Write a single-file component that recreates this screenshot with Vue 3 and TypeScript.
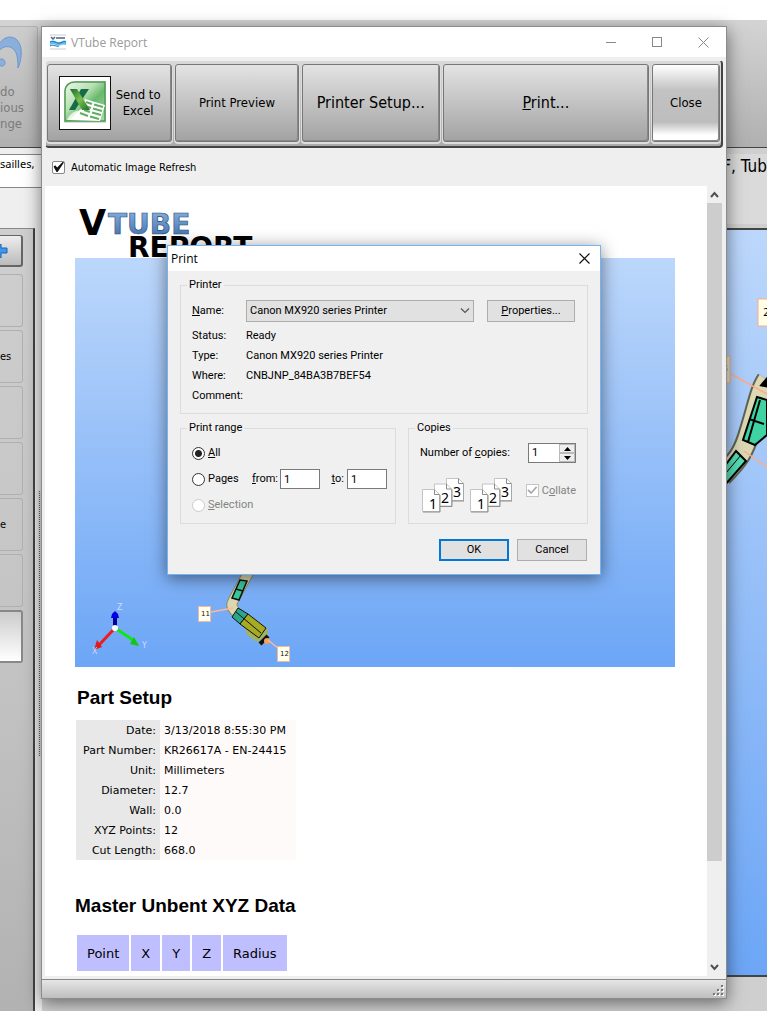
<script setup lang="ts">
import { ref } from 'vue'

interface Field {
  label: string
  value: string
}

const refresh = ref(true)
const collate = ref(true)
const range = ref('all')
const fromPage = ref('1')
const toPage = ref('1')
const copies = ref(1)
const printer = ref('Canon MX920 series Printer')

const sideButtons: string[] = ['', 'es', '', '', 'e', '']

const printerInfo: Field[] = [
  { label: 'Status:', value: 'Ready' },
  { label: 'Type:', value: 'Canon MX920 series Printer' },
  { label: 'Where:', value: 'CNBJNP_84BA3B7BEF54' },
  { label: 'Comment:', value: '' },
]

const partSetup: Field[] = [
  { label: 'Date:', value: '3/13/2018 8:55:30 PM' },
  { label: 'Part Number:', value: 'KR26617A - EN-24415' },
  { label: 'Unit:', value: 'Millimeters' },
  { label: 'Diameter:', value: '12.7' },
  { label: 'Wall:', value: '0.0' },
  { label: 'XYZ Points:', value: '12' },
  { label: 'Cut Length:', value: '668.0' },
]

const columns: string[] = ['Point', 'X', 'Y', 'Z', 'Radius']

function step(delta: number): void {
  copies.value = Math.max(1, copies.value + delta)
}
</script>

<template>
  <div class="desktop">
    <div class="app">
      <header class="ribbon">
        <button class="undo" type="button">
          <svg width="24" height="34" viewBox="0 0 24 34" aria-hidden="true">
            <path d="M-2 10C3 0 12 -1 17 4C22 9 23 20 18 32C18 22 17 15 12 12C7 9 2 11 -2 16Z" fill="#8aafdc" stroke="#6f97cc" />
            <path d="M-2 24C2 22 5 23 5 27C5 30 2 31 -2 29Z" fill="#8aafdc" stroke="#6f97cc" />
          </svg>
          <span>do</span><span>ious</span><span>nge</span>
        </button>
      </header>
      <div class="workspace">
        <aside class="side">
          <div class="address">sailles,</div>
          <div class="side-body">
            <div class="panel">
              <button class="add" type="button" aria-label="Add">
                <svg width="8" height="14" viewBox="0 0 8 14"><path d="M-6 4H-3V0H1V4H7V9H1V14H-3V9H-6Z" fill="#3d97ee" stroke="#1c63b5" /></svg>
              </button>
              <button v-for="(text, i) in sideButtons" :key="i" class="side-btn" type="button">{{ text }}</button>
              <button class="side-btn active" type="button" aria-label="Selected"></button>
            </div>
            <div class="splitter"></div>
          </div>
        </aside>
        <section class="viewer">
          <div class="viewer-title">F, Tub</div>
          <div class="viewer-scene">
            <svg width="41" height="270" viewBox="0 0 41 270" aria-hidden="true">
              <path d="M41 150C34 160 31 178 24 200C18 222 12 230 -4 246" fill="none" stroke="#5f6350" stroke-width="22" />
              <path d="M41 150C34 160 31 178 24 200C18 222 12 230 -4 246" fill="none" stroke="#dcd8b4" stroke-width="18" />
              <path d="M31 167L41 170V205L29 215L17 210Z" fill="#3fd3a3" stroke="#000" stroke-width="2" />
              <path d="M23 189L38 194M34 170L22 212" fill="none" stroke="#000" stroke-width="2" />
              <path d="M10 221L20 231L-2 256V237Z" fill="#55deb4" stroke="#000" stroke-width="2" />
              <path d="M15 225L0 243" stroke="#000" />
              <path d="M36 155L41 149V156Z" stroke="#000" stroke-width="3" />
              <path d="M5 144L41 164M18 221L41 237" stroke="#ffac86" stroke-width="1.5" />
              <rect x="-8" y="126" width="12" height="27" fill="#e6e4c6" stroke="#f4ad8a" />
              <rect x="32" y="69" width="14" height="27" fill="#fffee6" stroke="#ffac86" />
              <text x="37" y="86" font-family="DejaVu Sans" font-size="11">2</text>
              <text x="-5" y="142" font-family="DejaVu Sans" font-size="11">3</text>
            </svg>
          </div>
        </section>
      </div>
    </div>

    <main class="window">
      <header class="titlebar">
        <svg width="16" height="16" viewBox="0 0 16 16" aria-hidden="true">
          <path d="M0 1H16M0 15H16" stroke="#ccc" />
          <path d="M1 3L3 5L5 3M6 4H15" stroke="#4e6485" stroke-width="1.5" fill="none" />
          <path d="M0 7C4 5 7 9 10 8C13 7 14 6 16 7V11C12 9 10 13 6 11C4 10 2 10 0 11Z" fill="#5dc0f2" />
          <path d="M0 8C4 6 7 10 10 9C13 8 14 7 16 8M0 12C4 10 6 13 9 12" stroke="#1c6fb8" fill="none" />
        </svg>
        <h1>VTube Report</h1>
        <div class="caption">
          <button type="button" aria-label="Minimize"><svg width="11" height="11"><path d="M0 5.5H10" stroke="#888" /></svg></button>
          <button type="button" aria-label="Maximize"><svg width="11" height="11"><rect x=".5" y=".5" width="9" height="9" fill="none" stroke="#888" /></svg></button>
          <button type="button" aria-label="Close window"><svg width="11" height="11"><path d="M.5 .5L10.5 10.5M10.5 .5L.5 10.5" stroke="#888" /></svg></button>
        </div>
      </header>

      <nav class="toolbar">
        <button class="tool excel" type="button">
          <svg width="52" height="54" viewBox="0 0 52 54" aria-hidden="true">
            <defs>
              <linearGradient id="xl" x1="0" y1="0" x2="1" y2="1">
                <stop offset="0" stop-color="#eef8ea" /><stop offset=".4" stop-color="#b5dfb0" /><stop offset=".6" stop-color="#67b96c" /><stop offset="1" stop-color="#aadba4" />
              </linearGradient>
              <linearGradient id="xg" x1="0" y1="0" x2="1" y2="1">
                <stop offset="0" stop-color="#126c36" /><stop offset=".5" stop-color="#7cc04b" /><stop offset="1" stop-color="#176e30" />
              </linearGradient>
            </defs>
            <rect x=".5" y=".5" width="51" height="53" fill="#fff" stroke="#111" />
            <path d="M16 5H47V47H5V16C5 10 9 5 16 5Z" fill="#999" opacity=".35" />
            <path d="M16 6H46V45H6V15C6 10 10 6 16 6Z" fill="url(#xl)" stroke="#4c9a54" stroke-width="1.5" />
            <path d="M8 44C10 38 16 34 24 34L30 44Z" fill="#e4f4df" />
            <path d="M26 23L46 29L41 45L10 44L22 33Z" fill="#fff" />
            <path d="M27 26L33 28M35 28.5L44 31M26 30L32 32M34 32.5L43 35M25 34L31 36M33 36.5L42 39M21 37L29 40M31 40.5L40 43" stroke="#61ad61" stroke-width="2" />
            <path d="M22 13H30L16 34H10Z" fill="#176b48" />
            <path d="M11 13H18L31 34H23Z" fill="url(#xg)" />
          </svg>
          <span>Send to<br>Excel</span>
        </button>
        <button class="tool preview" type="button">Print Preview</button>
        <button class="tool setup large" type="button">Printer Setup...</button>
        <button class="tool print large" type="button"><span><u>P</u>rint...</span></button>
        <button class="tool close" type="button">Close</button>
      </nav>

      <label class="refresh"><input v-model="refresh" class="check dark" type="checkbox">Automatic Image Refresh</label>

      <div class="body">
        <article class="report">
          <svg class="logo" width="240" height="52" viewBox="0 0 240 52" role="img" aria-label="VTube Report">
            <defs>
              <linearGradient id="tube" x1="0" y1="0" x2="0" y2="1">
                <stop offset="0" stop-color="#8bb4e2" /><stop offset="1" stop-color="#3a6ba8" />
              </linearGradient>
            </defs>
            <g font-family="DejaVu Sans" font-weight="bold">
              <text x="4" y="29" font-size="35">V</text>
              <text x="33" y="28" font-size="28" fill="url(#tube)" stroke="#27466f" stroke-width=".6">TUBE</text>
              <text x="53" y="51" font-size="28">REPORT</text>
            </g>
          </svg>
          <svg class="scene" viewBox="0 0 600 409" role="img" aria-label="Tube model">
            <defs>
              <linearGradient id="sky" x1="0" y1="0" x2="0" y2="1">
                <stop offset="0" stop-color="#bcd7fb" /><stop offset=".5" stop-color="#94bef8" /><stop offset="1" stop-color="#6ca6f6" />
              </linearGradient>
            </defs>
            <rect width="600" height="409" fill="url(#sky)" />
            <path d="M40 370V358" stroke="#00009c" stroke-width="4" />
            <path d="M36 360L37 356L40 353L43 356L44 360Z" fill="#0000e8" />
            <path d="M40 370L24 387" stroke="#f01c1c" stroke-width="3" />
            <path d="M22 382L27 389L19 392Z" fill="#e01a1a" />
            <path d="M40 370L58 382" stroke="#10e610" stroke-width="3" />
            <path d="M59 379L64 388L55 386Z" fill="#10c810" />
            <circle cx="40" cy="370" r="3" fill="#fff" />
            <g font-family="DejaVu Sans" font-size="8" fill="#c9dcff">
              <text x="42" y="352">Z</text><text x="17" y="396">X</text><text x="67" y="390">Y</text>
            </g>
            <path d="M176 310L158 343Q155 348 160 353L186 377" fill="none" stroke="#8f8d6c" stroke-width="11" />
            <path d="M176 310L158 343Q155 348 160 353L186 377" fill="none" stroke="#dcd7ae" stroke-width="9" />
            <path d="M165 322L172 323L164 342L157 340Z" fill="#36c99b" stroke="#111" stroke-width="1.5" />
            <path d="M161 331L168 333" stroke="#111" stroke-width="1.5" />
            <path d="M170 363L180 361L193 371V385L180 383L171 376Z" fill="#b5b524" opacity=".65" />
            <path d="M163 350L173 356L165 366L157 359Z" fill="#2ca58d" stroke="#111" />
            <path d="M173 356L191 370L184 380L165 366Z" fill="#a5ac22" stroke="#111" />
            <path d="M161 354L186 375" stroke="#111" />
            <path d="M193 378L185 386" stroke="#111" stroke-width="4" />
            <circle cx="192" cy="383" r="3" fill="#f0a15a" />
            <path d="M136 354L158 350M193 382L204 391" stroke="#ffb795" stroke-width="1.5" />
            <g fill="#fffff0" stroke="#efb99e">
              <rect x="123.500" y="348.500" width="12" height="15" /><rect x="202.500" y="388.500" width="12" height="15" />
            </g>
            <g font-family="DejaVu Sans" font-size="7" fill="#111">
              <text x="126" y="358">11</text><text x="205" y="398">12</text>
            </g>
          </svg>
          <h2>Part Setup</h2>
          <table class="facts">
            <tbody>
              <tr v-for="f in partSetup" :key="f.label"><th scope="row">{{ f.label }}</th><td>{{ f.value }}</td></tr>
            </tbody>
          </table>
          <h2 class="second">Master Unbent XYZ Data</h2>
          <table class="xyz">
            <thead><tr><th v-for="c in columns" :key="c" scope="col">{{ c }}</th></tr></thead>
          </table>
        </article>
        <div class="scrollbar">
          <button type="button" aria-label="Scroll up"><svg width="9" height="7"><path d="M1 6L4.500 2L8 6" fill="none" stroke="#505050" stroke-width="2" /></svg></button>
          <div class="track"><div class="thumb"></div></div>
          <button type="button" aria-label="Scroll down"><svg width="9" height="7"><path d="M1 1L4.500 5L8 1" fill="none" stroke="#505050" stroke-width="2" /></svg></button>
        </div>
      </div>

      <footer class="status">
        <svg width="12" height="12" viewBox="0 0 12 12" aria-hidden="true">
          <path d="M9 1h2v2h-2zM5 5h2v2h-2zM9 5h2v2h-2zM1 9h2v2h-2zM5 9h2v2h-2zM9 9h2v2h-2z" fill="#fff" />
          <path d="M8 0h2v2h-2zM4 4h2v2h-2zM8 4h2v2h-2zM0 8h2v2h-2zM4 8h2v2h-2zM8 8h2v2h-2z" fill="#777" />
        </svg>
      </footer>

      <section class="dialog" role="dialog" aria-labelledby="dlg-title">
        <header class="dialog-title">
          <h2 id="dlg-title">Print</h2>
          <button type="button" aria-label="Close dialog"><svg width="11" height="11"><path d="M.5 .5L10.5 10.5M10.5 .5L.5 10.5" stroke="#111" stroke-width="1.2" /></svg></button>
        </header>
        <form class="dialog-body" @submit.prevent>
          <fieldset class="printer">
            <legend>Printer</legend>
            <div class="name-row">
              <label for="printer"><u>N</u>ame:</label>
              <div class="select">
                <select id="printer" v-model="printer"><option>Canon MX920 series Printer</option></select>
                <svg width="10" height="6" viewBox="0 0 10 6" aria-hidden="true"><path d="M1 .5L5 4.500L9 .5" fill="none" stroke="#555" stroke-width="1.2" /></svg>
              </div>
              <button class="btn props" type="button"><span><u>P</u>roperties...</span></button>
            </div>
            <dl>
              <template v-for="f in printerInfo" :key="f.label"><dt>{{ f.label }}</dt><dd>{{ f.value }}</dd></template>
            </dl>
          </fieldset>
          <div class="columns">
            <fieldset class="range">
              <legend>Print range</legend>
              <div class="line"><label><input v-model="range" class="radio" type="radio" value="all"><span><u>A</u>ll</span></label></div>
              <div class="line">
                <label class="pages"><input v-model="range" class="radio" type="radio" value="pages"><span>Pa<u>g</u>es</span></label>
                <label for="from"><u>f</u>rom:</label><input id="from" v-model="fromPage" class="num" type="text">
                <label for="to" class="to"><u>t</u>o:</label><input id="to" v-model="toPage" class="num" type="text">
              </div>
              <div class="line"><label class="off"><input v-model="range" class="radio" type="radio" value="selection" disabled><span><u>S</u>election</span></label></div>
            </fieldset>
            <fieldset class="copies">
              <legend>Copies</legend>
              <div class="line spread">
                <label for="copies"><span>Number of <u>c</u>opies:</span></label>
                <div class="spinner">
                  <input id="copies" v-model="copies" type="text">
                  <div>
                    <button type="button" aria-label="More copies" @click="step(1)"><svg width="7" height="4"><path d="M0 4L3.500 0L7 4Z" /></svg></button>
                    <button type="button" aria-label="Fewer copies" @click="step(-1)"><svg width="7" height="4"><path d="M0 0L3.500 4L7 0Z" /></svg></button>
                  </div>
                </div>
              </div>
              <div class="spread">
                <div class="stacks">
                  <svg v-for="n in 2" :key="n" width="42" height="36" viewBox="0 0 42 36" aria-hidden="true">
                    <g v-for="p in [3, 2, 1]" :key="p">
                      <path :d="`M${p * 12 - 11.5} ${17.5 - p * 5.5 + 0.5}h12l5 5v17h-17z`" fill="#fff" stroke="#c4c4c4" />
                      <path :d="`M${p * 12 + 0.5} ${18 - p * 5.5}v5h5M${p * 12 - 11} ${40.5 - p * 5.5}h17v-17`" fill="none" stroke="#8c8c8c" />
                      <text :x="p * 12 - 5" :y="38 - p * 6" font-family="Noto Sans" font-size="14">{{ p }}</text>
                    </g>
                  </svg>
                </div>
                <label class="off"><input v-model="collate" class="check" type="checkbox" disabled><span>C<u>o</u>llate</span></label>
              </div>
            </fieldset>
          </div>
          <div class="actions">
            <button class="btn ok" type="submit">OK</button>
            <button class="btn" type="button">Cancel</button>
          </div>
        </form>
      </section>
    </main>
  </div>
</template>

<style>
html,
body {
  margin: 0;
  background: #fff;
}
</style>

<style scoped>
* {
  box-sizing: border-box;
}
button,
input,
select {
  margin: 0;
  padding: 0;
  font: inherit;
  color: inherit;
}
button {
  border: 0;
  background: none;
}
svg {
  display: block;
  flex: none;
}
.desktop {
  position: relative;
  min-height: 100vh;
  overflow: hidden;
  font-family: "DejaVu Sans Condensed", "Noto Sans", sans-serif;
  font-size: 11px;
  color: #000;
}
.app {
  display: flex;
  flex-direction: column;
  min-height: 100vh;
  padding-top: 20px;
}
.ribbon {
  height: 128px;
  padding: 6px 0 10px;
  background: linear-gradient(#d4d4d4, #b0b0b0);
  border-bottom: 1px solid #444;
}
.undo {
  display: flex;
  flex-direction: column;
  align-items: flex-start;
  width: 38px;
  height: 112px;
  padding-top: 9px;
  border: 1px solid #b4b4b4;
  border-left: 0;
  border-radius: 0 3px 3px 0;
  background: linear-gradient(#cdcdcd, #b4b4b4);
  font-size: 13px;
  line-height: 16px;
  color: #7b7b7b;
}
.undo svg {
  margin-bottom: 14px;
}
.workspace {
  display: flex;
  flex: 1;
  background: #efefef;
}
.side {
  display: flex;
  flex-direction: column;
  width: 42px;
  padding-top: 6px;
}
.address {
  height: 34px;
  padding-top: 2px;
  border: 1px solid #888;
  border-width: 1px 0;
  background: #fff;
  font-family: "Noto Sans", sans-serif;
  line-height: 14px;
}
.side-body {
  display: flex;
  flex: 1;
  margin-top: 40px;
}
.panel {
  display: flex;
  flex-direction: column;
  gap: 3px;
  width: 35px;
  padding-top: 6px;
  border-top: 1px solid #888;
  border-right: 2px solid #444;
  background: linear-gradient(#cfcfcf, #c2c2c2 60%, #b2b2b2);
}
.add,
.side-btn {
  width: 23px;
  border: 1px solid #b0b0b0;
  border-left: 0;
  border-radius: 0 3px 3px 0;
  text-align: left;
}
.add {
  height: 32px;
  margin-bottom: 4px;
  border-color: #666;
  border-width: 1px 2px 2px 0;
  background: linear-gradient(#eee, #bbb);
}
.side-btn {
  height: 53px;
  font-size: 11px;
}
.side-btn.active {
  border: 2px solid #888;
  border-left: 0;
  background: linear-gradient(#ccc, #fff);
}
.splitter {
  width: 4px;
  height: 265px;
  margin: 263px 0 0 3px;
  background: conic-gradient(#666 25%, #e4e4e4 0) 0 0 / 2px 2px;
}
.viewer {
  display: flex;
  flex-direction: column;
  flex: 1;
  padding-top: 6px;
  background: #cfcfcf;
}
.viewer-title {
  display: flex;
  justify-content: flex-end;
  height: 70px;
  padding-top: 2px;
  background: #dadada;
  font-size: 17px;
  line-height: 20px;
}
.viewer-scene {
  display: flex;
  justify-content: flex-end;
  flex: 1;
  margin-top: 4px;
  margin-bottom: 34px;
  border: 1px solid #444;
  border-width: 2px 0;
  background: linear-gradient(#bcd7fb, #94bef8 50%, #6ca6f6);
}
.window {
  position: absolute;
  inset: 26px 40px 12px 41px;
  display: flex;
  flex-direction: column;
  border: 1px solid #8c8c8c;
  background: #efefef;
  box-shadow: 0 4px 16px rgba(0, 0, 0, 0.5);
}
.titlebar {
  display: flex;
  align-items: center;
  height: 30px;
  padding-left: 8px;
  background: #fff;
}
h1 {
  flex: 1;
  margin: 0 0 0 5px;
  font: 12px "Open Sans", sans-serif;
  color: #999;
}
.caption {
  display: flex;
}
.caption button {
  display: flex;
  justify-content: center;
  width: 46px;
}
.toolbar {
  display: flex;
  gap: 3px;
  height: 88px;
  margin: 3px 3px 0;
  padding: 3px 1px 4px;
  border: 1px solid #444;
  border-color: #eee #444 #444 #eee;
  border-width: 1px 2px 2px 1px;
  border-radius: 4px;
  background: linear-gradient(#d9d9d9, #aaa);
}
.tool {
  display: flex;
  align-items: center;
  justify-content: center;
  border: 1px solid #777;
  border-radius: 3px;
  background: linear-gradient(#e3e3e3, #a2a2a2);
  box-shadow: 0 1px 0 1px #ddd, inset -1px -1px 0 #888;
  font-size: 13px;
  line-height: 16px;
}
.excel {
  flex: 125 1 0;
  gap: 5px;
}
.preview {
  flex: 123 1 0;
}
.setup {
  flex: 138 1 0;
}
.print {
  flex: 207 1 0;
}
.close {
  flex: 67 1 0;
  background: linear-gradient(#fff, #c2c2c2 33%, #bdbdbd 75%, #fff 92%);
}
.large {
  font-size: 16px;
}
.refresh {
  display: flex;
  align-items: center;
  gap: 6px;
  height: 38px;
  padding-left: 10px;
}
.body {
  display: flex;
  flex: 1;
  min-height: 0;
  margin: 0 4px 3px 3px;
}
.report {
  flex: 1;
  padding: 20px 32px 0 30px;
  overflow: hidden;
  background: #fff;
}
.scene {
  width: 100%;
  max-width: 600px;
}
h2 {
  margin: 19px 0 11px 2px;
  font: bold 19px/23px "Liberation Sans", Arial, sans-serif;
}
.second {
  margin: 34px 0 18px;
}
table {
  border-collapse: collapse;
  font-family: "DejaVu Sans", Verdana, sans-serif;
}
th {
  font-weight: normal;
}
.facts {
  width: 220px;
  margin-left: 1px;
}
.facts th,
.facts td {
  height: 20px;
  padding: 1px 4px 0;
  background: #fffafa;
}
.facts th {
  width: 84px;
  background: #e8e8e8;
  text-align: right;
}
.xyz {
  border-collapse: separate;
  border-spacing: 2px 0;
  font-size: 13px;
}
.xyz th {
  height: 36px;
  padding: 0 10px;
  background: #bfbfff;
}
.scrollbar {
  display: flex;
  flex-direction: column;
  width: 15px;
}
.scrollbar button {
  display: flex;
  align-items: center;
  justify-content: center;
  height: 17px;
}
.track {
  flex: 1;
}
.thumb {
  height: 87%;
  background: #cdcdcd;
}
.status {
  display: flex;
  align-items: flex-end;
  justify-content: flex-end;
  height: 19px;
  padding: 0 1px 1px;
  border-top: 1px solid #888;
  background: linear-gradient(#e6e6e6, #bebebe);
}
.dialog {
  position: absolute;
  top: 218px;
  left: 125px;
  width: 434px;
  border: 1px solid #75b4f3;
  background: #f0f0f0;
  box-shadow: 0 3px 16px rgba(0, 0, 0, 0.5);
  font-family: Roboto, "Liberation Sans", sans-serif;
  line-height: 14px;
}
.dialog-title {
  display: flex;
  align-items: center;
  justify-content: space-between;
  height: 25px;
  padding: 0 10px 0 3px;
  background: #fff;
}
.dialog-title h2 {
  margin: 0;
  font: 12px "Open Sans", sans-serif;
}
.dialog-body {
  padding: 7px 12px 13px;
}
fieldset {
  min-width: 0;
  margin: 0;
  padding: 0 11px;
  border: 1px solid #dcdcdc;
}
legend {
  margin-left: -5px;
  padding: 0 2px;
}
.printer {
  padding: 8px 12px 7px 11px;
}
.name-row {
  display: flex;
  align-items: center;
}
.name-row label {
  width: 54px;
}
.select {
  position: relative;
  flex: 1;
}
.select svg {
  position: absolute;
  top: 8px;
  right: 4px;
  pointer-events: none;
}
select {
  display: block;
  width: 100%;
  height: 22px;
  padding: 0 3px;
  border: 1px solid #adadad;
  border-radius: 0;
  background: #e1e1e1;
  appearance: none;
}
.btn {
  height: 22px;
  width: 70px;
  border: 1px solid #adadad;
  background: #e1e1e1;
}
.btn.props {
  width: 88px;
  margin-left: 13px;
}
.btn.ok {
  border: 2px solid #0078d7;
}
dl {
  display: grid;
  grid-template-columns: 54px 1fr;
  margin: 4px 0 0;
}
dt,
dd {
  height: 20px;
  margin: 0;
  line-height: 20px;
}
.columns {
  display: grid;
  grid-template-columns: 216px 180px;
  justify-content: space-between;
  margin-top: 7px;
}
.range,
.copies {
  padding: 5px 11px;
}
.range {
  padding-right: 8px;
}
.line,
.line label,
.off {
  display: flex;
  align-items: center;
}
.line {
  height: 26px;
}
.pages {
  width: 60px;
}
.line .to {
  margin-left: auto;
  padding-right: 3px;
}
.num {
  width: 40px;
  height: 20px;
  margin-left: 2px;
  padding: 0 3px;
  border: 1px solid #7a7a7a;
  background: #fff;
}
.line .to + .num {
  margin-left: 0;
}
.off {
  color: #838383;
}
.radio {
  width: 13px;
  height: 13px;
  margin-right: 3px;
  border: 1px solid #333;
  border-radius: 50%;
  background: #fff;
  appearance: none;
}
.radio:checked {
  background: radial-gradient(#222 3px, #fff 4px);
}
.radio:disabled {
  border-color: #ccc;
}
.check {
  display: grid;
  place-items: center;
  width: 13px;
  height: 13px;
  margin-right: 3px;
  border: 1px solid #c4c4c4;
  background: #fff;
  color: #aaa;
  appearance: none;
}
.check:checked::before {
  content: "";
  width: 11px;
  height: 11px;
  background: currentColor;
  clip-path: polygon(5% 50%, 18% 38%, 40% 62%, 84% 12%, 95% 22%, 40% 84%);
}
.check.dark {
  margin: 0;
  border-color: #888;
  border-radius: 2px;
  color: #111;
}
.check.dark:checked::before {
  clip-path: polygon(5% 48%, 20% 34%, 38% 55%, 92% 0, 98% 12%, 42% 95%, 32% 95%);
}
.spread {
  display: flex;
  align-items: center;
  justify-content: space-between;
}
.copies .off {
  margin-bottom: 2px;
}
.stacks {
  display: flex;
  gap: 6px;
  margin: 11px 0 4px 2px;
}
.spinner {
  display: flex;
  width: 48px;
  height: 20px;
  border: 1px solid #7a7a7a;
  background: #fff;
}
.spinner input {
  width: 30px;
  border: 0;
  padding: 0 3px;
  background: none;
}
.spinner > div {
  display: grid;
  flex: 1;
}
.spinner button {
  display: grid;
  place-items: center;
  border: 1px solid #bbb;
  background: #eee;
}
.actions {
  display: flex;
  justify-content: flex-end;
  gap: 8px;
  margin-top: 15px;
  padding-right: 1px;
}
</style>
